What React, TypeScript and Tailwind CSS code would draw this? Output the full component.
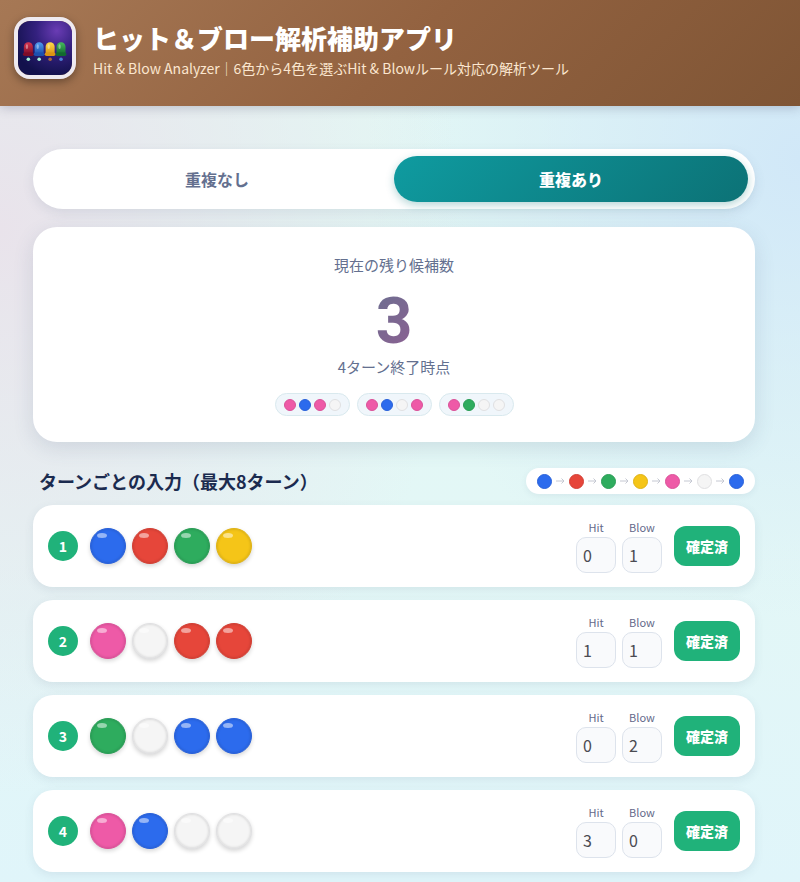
import clsx from "clsx";

type Color = "blue" | "red" | "green" | "yellow" | "pink" | "white";

const fills: Record<Color, string> = {
  blue: "bg-[#2c6bed] border-[#2961d9]",
  red: "bg-[#e6463a] border-[#d24035]",
  green: "bg-[#2eac5e] border-[#2a9d56]",
  yellow: "bg-[#f5c518] border-[#dfb316]",
  pink: "bg-[#ee5aa7] border-[#da5299]",
  white: "bg-[#f5f5f5] border-[#e0e0e2]",
};

const candidates: Color[][] = [
  ["pink", "blue", "pink", "white"],
  ["pink", "blue", "white", "pink"],
  ["pink", "green", "white", "white"],
];

const colorOrder: Color[] = ["blue", "red", "green", "yellow", "pink", "white", "blue"];

const turns: { pegs: Color[]; hit: number; blow: number }[] = [
  { pegs: ["blue", "red", "green", "yellow"], hit: 0, blow: 1 },
  { pegs: ["pink", "white", "red", "red"], hit: 1, blow: 1 },
  { pegs: ["green", "white", "blue", "blue"], hit: 0, blow: 2 },
  { pegs: ["pink", "blue", "white", "white"], hit: 3, blow: 0 },
];

function AppIcon() {
  const pegs = [
    { x: 11.5, top: "#d8354f", bottom: "#7c0d28", lamp: "#a7f5d8" },
    { x: 23.5, top: "#4f9df0", bottom: "#1c4fae", lamp: "#a7f5d8" },
    { x: 35.7, top: "#ffdc4a", bottom: "#dc9414", lamp: "#a8683c" },
    { x: 47.8, top: "#45bb5c", bottom: "#12692f", lamp: "#4d7fd6" },
  ];
  return (
    <svg viewBox="0 0 60 60" className="size-full" aria-hidden="true">
      <defs>
        <radialGradient id="icon-bg" cx="0.72" cy="0.18" r="0.85">
          <stop offset="0" stopColor="#6a3cb4" />
          <stop offset="0.45" stopColor="#34217f" />
          <stop offset="1" stopColor="#12114c" />
        </radialGradient>
        {pegs.map((peg, i) => (
          <linearGradient key={i} id={`peg-${i}`} x1="0" y1="0" x2="0" y2="1">
            <stop offset="0" stopColor={peg.top} />
            <stop offset="1" stopColor={peg.bottom} />
          </linearGradient>
        ))}
      </defs>
      <rect width="60" height="60" fill="url(#icon-bg)" />
      {pegs.map((peg, i) => (
        <g key={i}>
          <path d={`M${peg.x - 5} 37v-8.5a5 5 0 0 1 10 0v8.5z`} fill={`url(#peg-${i})`} />
          <rect x={peg.x - 6} y="35" width="12" height="4" rx="2" fill={peg.bottom} />
          <ellipse cx={peg.x - 1.6} cy="28.5" rx="1.3" ry="2.6" fill="#fff" opacity="0.4" />
          <circle cx={peg.x} cy="42.5" r="2" fill={peg.lamp} />
        </g>
      ))}
    </svg>
  );
}

function Dot({ color, className }: { color: Color; className?: string }) {
  return <span className={clsx("block rounded-full border", fills[color], className)} />;
}

function Peg({ color, label }: { color: Color; label: string }) {
  return (
    <button
      type="button"
      aria-label={label}
      className={clsx(
        "size-9 rounded-full border pl-1.5 shadow-[0_2px_4px_rgba(0,0,0,0.16),inset_0_0_3px_rgba(0,0,0,0.18)]",
        fills[color]
      )}
    >
      <span className="mb-[22px] block h-[5px] w-2.5 rounded-[50%] bg-white/50" />
    </button>
  );
}

function CountInput({ id, label, value }: { id: string; label: string; value: number }) {
  return (
    <div className="flex flex-col items-center gap-0.5">
      <label htmlFor={id} className="text-[11px] leading-4 text-[#64698a]">
        {label}
      </label>
      <input
        id={id}
        type="text"
        inputMode="numeric"
        readOnly
        value={value}
        className="h-9 w-10 rounded-[10px] border border-[#dde3ec] bg-[#f9fafc] px-1.5 text-base text-[#4b4b52]"
      />
    </div>
  );
}

export default function App() {
  return (
    <div className="min-h-screen bg-[radial-gradient(58%_64%_at_0%_26%,#e9e3eb_0%,#e9e3eb00_100%),radial-gradient(54%_52%_at_100%_18%,#d1e8f8_0%,#d1e8f800_100%),linear-gradient(180deg,#e3f8f4_0%,#e3f7f6_60%,#e0f5fa_100%)] font-['Noto_Sans_CJK_JP','Noto_Sans',sans-serif]">
      <header className="flex items-start gap-[17px] bg-[linear-gradient(135deg,#a67855_0%,#936240_50%,#7f5535_100%)] px-[14px] pt-[17px] pb-[26px] shadow-[0_2px_10px_rgba(60,60,90,0.25)]">
        <div className="size-[62px] shrink-0 overflow-hidden rounded-2xl border-4 border-[#eeeaf0] shadow-[0_3px_8px_rgba(0,0,0,0.35)]">
          <AppIcon />
        </div>
        <div className="pt-[3px]">
          <h1 className="text-[26px] leading-9 font-black text-white">
            ヒット＆ブロー解析補助アプリ
          </h1>
          <p className="text-sm leading-6 text-[#fbe6cf]">
            Hit &amp; Blow Analyzer｜6色から4色を選ぶHit &amp; Blowルール対応の解析ツール
          </p>
        </div>
      </header>

      <main className="pt-[43px] pr-[45px] pb-3 pl-[33px]">
        {/* Duplicate mode switch */}
        <div className="grid grid-cols-2 rounded-full bg-white p-[7px] shadow-[0_4px_12px_rgba(70,90,120,0.12)]">
          <button type="button" className="h-[46px] rounded-full text-base font-bold text-[#64708f]">
            重複なし
          </button>
          <button
            type="button"
            className="h-[46px] rounded-full bg-linear-135 from-[#0f9ba0] to-[#0c7276] text-base font-black text-white shadow-[0_3px_8px_rgba(13,120,124,0.3)]"
          >
            重複あり
          </button>
        </div>

        {/* Remaining candidates */}
        <section className="mt-[18px] flex flex-col items-center rounded-3xl bg-white pt-[26px] pb-[26px] shadow-[0_6px_20px_rgba(70,90,120,0.15)]">
          <p className="text-[15px] leading-6 text-[#64708f]">現在の残り候補数</p>
          <p className="bg-linear-135 from-[#667090] to-[#8d5f92] bg-clip-text pt-3 font-[Roboto,sans-serif] text-[64px] leading-[66px] font-bold text-transparent">
            3
          </p>
          <p className="text-[15px] leading-6 text-[#64708f]">4ターン終了時点</p>
          <ul className="mt-[14px] flex gap-[7px]">
            {candidates.map((pegs, i) => (
              <li
                key={i}
                className="flex h-[23px] items-center gap-[3px] rounded-full border border-[#d9e9ee] bg-[#f0f6fb] px-2"
              >
                {pegs.map((color, j) => (
                  <Dot key={j} color={color} className="size-3" />
                ))}
              </li>
            ))}
          </ul>
        </section>

        <div className="mt-[26px] flex items-center justify-between pl-1.5">
          <h2 className="text-lg leading-6 font-bold text-[#1b2b4f]">
            ターンごとの入力（最大8ターン）
          </h2>
          <div className="flex h-[26px] items-center gap-1 rounded-full bg-white px-[11px] shadow-[0_2px_6px_rgba(70,90,120,0.08)]">
            {colorOrder.map((color, i) => (
              <div key={i} className="flex items-center gap-1">
                {i > 0 && (
                  <svg
                    viewBox="0 0 9 8"
                    className="h-2 w-[9px] fill-none stroke-[#c5c8d2]"
                    aria-hidden="true"
                  >
                    <path d="M0 4h8M5.5 1.5 8 4 5.5 6.5" />
                  </svg>
                )}
                <Dot color={color} className="size-[15px]" />
              </div>
            ))}
          </div>
        </div>

        <ol className="mt-[11px] flex flex-col gap-[13px]">
          {turns.map((turn, i) => (
            <li
              key={i}
              className="flex items-center justify-between rounded-[20px] bg-white px-[15px] py-[14px] shadow-[0_3px_10px_rgba(70,90,120,0.1)]"
            >
              <div className="flex items-center gap-3">
                <span className="flex size-[30px] items-center justify-center rounded-full bg-[#20b27a] text-sm font-bold text-white">
                  {i + 1}
                </span>
                <div className="flex gap-1.5">
                  {turn.pegs.map((color, j) => (
                    <Peg key={j} color={color} label={color} />
                  ))}
                </div>
              </div>
              <div className="flex items-center gap-3">
                <div className="flex gap-1.5">
                  <CountInput id={`hit-${i}`} label="Hit" value={turn.hit} />
                  <CountInput id={`blow-${i}`} label="Blow" value={turn.blow} />
                </div>
                <button
                  type="button"
                  className="h-10 w-[66px] rounded-xl bg-[#20b27a] text-sm font-black text-white"
                >
                  確定済
                </button>
              </div>
            </li>
          ))}
        </ol>
      </main>
    </div>
  );
}
